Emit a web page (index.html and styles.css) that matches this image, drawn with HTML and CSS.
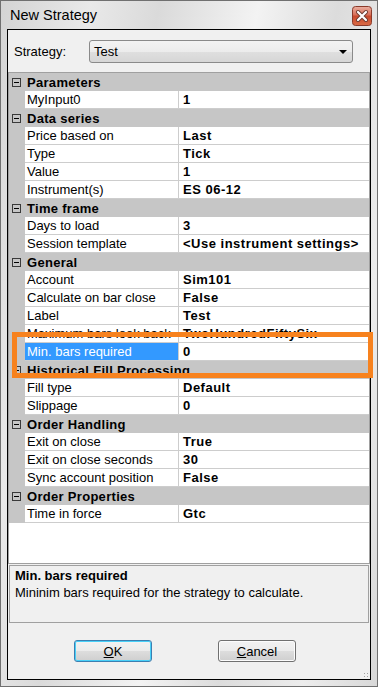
FILE: index.html
```html
<!DOCTYPE html>
<html lang="en">
<head>
    <meta charset="UTF-8">
    <title>New Strategy</title>
    <link rel="stylesheet" href="styles.css">
</head>
<body>
    <div class="window">
        <div class="titlebar">
            <span class="title">New Strategy</span>
            <svg class="close" width="20" height="20" viewBox="0 0 20 20">
                <defs>
                    <linearGradient id="red" x1="0" y1="0" x2="0" y2="1">
                        <stop offset="0" stop-color="#eab0a2"/>
                        <stop offset="0.45" stop-color="#d86e57"/>
                        <stop offset="0.5" stop-color="#c9492d"/>
                        <stop offset="1" stop-color="#d96b45"/>
                    </linearGradient>
                </defs>
                <rect x="0.5" y="0.5" width="19" height="19" rx="3" fill="url(#red)" stroke="#8a3a2a"/>
                <path d="M6 6 L14 14 M14 6 L6 14" stroke="#6b3a30" stroke-width="4" stroke-linecap="round"/>
                <path d="M6 6 L14 14 M14 6 L6 14" stroke="#ffffff" stroke-width="2.2" stroke-linecap="round"/>
            </svg>
        </div>

        <div class="client">
            <div class="strategy-row">
                <label class="strategy-label">Strategy:</label>
                <div class="combo">
                    <span>Test</span>
                    <span class="arrow"></span>
                </div>
            </div>

            <div class="grid">
                <div class="cat"><span class="toggle"></span>Parameters</div>
                <div class="prop"><span class="gutter"></span><span class="name">MyInput0</span><span class="value">1</span></div>

                <div class="cat"><span class="toggle"></span>Data series</div>
                <div class="prop"><span class="gutter"></span><span class="name">Price based on</span><span class="value">Last</span></div>
                <div class="prop"><span class="gutter"></span><span class="name">Type</span><span class="value">Tick</span></div>
                <div class="prop"><span class="gutter"></span><span class="name">Value</span><span class="value">1</span></div>
                <div class="prop"><span class="gutter"></span><span class="name">Instrument(s)</span><span class="value">ES 06-12</span></div>

                <div class="cat"><span class="toggle"></span>Time frame</div>
                <div class="prop"><span class="gutter"></span><span class="name">Days to load</span><span class="value">3</span></div>
                <div class="prop"><span class="gutter"></span><span class="name">Session template</span><span class="value">&lt;Use instrument settings&gt;</span></div>

                <div class="cat"><span class="toggle"></span>General</div>
                <div class="prop"><span class="gutter"></span><span class="name">Account</span><span class="value">Sim101</span></div>
                <div class="prop"><span class="gutter"></span><span class="name">Calculate on bar close</span><span class="value">False</span></div>
                <div class="prop"><span class="gutter"></span><span class="name">Label</span><span class="value">Test</span></div>
                <div class="prop"><span class="gutter"></span><span class="name">Maximum bars look back</span><span class="value">TwoHundredFiftySix</span></div>
                <div class="prop selected"><span class="gutter"></span><span class="name">Min. bars required</span><span class="value">0</span></div>

                <div class="cat"><span class="toggle"></span>Historical Fill Processing</div>
                <div class="prop"><span class="gutter"></span><span class="name">Fill type</span><span class="value">Default</span></div>
                <div class="prop"><span class="gutter"></span><span class="name">Slippage</span><span class="value">0</span></div>

                <div class="cat"><span class="toggle"></span>Order Handling</div>
                <div class="prop"><span class="gutter"></span><span class="name">Exit on close</span><span class="value">True</span></div>
                <div class="prop"><span class="gutter"></span><span class="name">Exit on close seconds</span><span class="value">30</span></div>
                <div class="prop"><span class="gutter"></span><span class="name">Sync account position</span><span class="value">False</span></div>

                <div class="cat"><span class="toggle"></span>Order Properties</div>
                <div class="prop"><span class="gutter"></span><span class="name">Time in force</span><span class="value">Gtc</span></div>
            </div>

            <div class="description">
                <div class="desc-title">Min. bars required</div>
                <div class="desc-text">Mininim bars required for the strategy to calculate.</div>
            </div>

            <div class="buttons">
                <button class="btn default"><u>O</u>K</button>
                <button class="btn"><u>C</u>ancel</button>
            </div>

            <div class="grip"></div>
        </div>
    </div>

    <div class="highlight"></div>
</body>
</html>
```

FILE: styles.css
```css
body {
    margin: 0;
    font-family: "Liberation Sans", Arial, sans-serif;
    font-size: 13px;
    color: #000;
}

.window {
    position: relative;
    width: 378px;
    height: 687px;
    box-sizing: border-box;
    border: 1px solid #707070;
    background: linear-gradient(100deg, #d4d4d4 0%, #e9e9e9 18%, #dadada 32%, #f3f3f3 52%, #dcdcdc 68%, #ececec 85%, #d8d8d8 100%);
}

.titlebar {
    height: 28px;
    display: flex;
    align-items: flex-start;
    justify-content: space-between;
    padding: 0 5px 0 9px;
}

.title {
    font-size: 14.5px;
    color: #000;
    margin-top: 6px;
}

.close {
    display: block;
    margin-top: 5px;
}

.client {
    position: relative;
    margin: 0 6px;
    height: 651px;
    box-sizing: border-box;
    border: 1px solid #000;
    background-color: #f0f0f0;
}

.strategy-row {
    display: flex;
    align-items: center;
    padding: 10px 0 0 6px;
    height: 23px;
}

.strategy-label {
    width: 75px;
}

.combo {
    width: 264px;
    height: 23px;
    box-sizing: border-box;
    border: 1px solid #8a8a8a;
    border-radius: 3px;
    background: linear-gradient(#f3f3f3 0%, #ececec 50%, #dfdfdf 51%, #d6d6d6 100%);
    display: flex;
    align-items: center;
    justify-content: space-between;
    padding: 0 5px 0 4px;
}

.arrow {
    width: 0;
    height: 0;
    border-left: 4px solid transparent;
    border-right: 4px solid transparent;
    border-top: 4px solid #000;
}

.grid {
    margin-top: 9px;
    height: 492px;
    box-sizing: border-box;
    border: 1px solid #a0a0a0;
    background-color: #fff;
}

.cat {
    height: 18px;
    line-height: 18px;
    padding-top: 1px;
    box-sizing: border-box;
    background-color: #c6c6c6;
    font-weight: bold;
    letter-spacing: 0.3px;
    display: flex;
    align-items: center;
}

.toggle {
    position: relative;
    width: 9px;
    height: 9px;
    box-sizing: border-box;
    border: 1px solid #3a3a3a;
    margin: 0 6px 0 3px;
}

.toggle::after {
    content: "";
    position: absolute;
    left: 1px;
    top: 3px;
    width: 5px;
    height: 1px;
    background-color: #000;
}

.prop {
    display: grid;
    grid-template-columns: 16px 153px 191px;
    height: 18px;
}

.gutter {
    background-color: #c6c6c6;
}

.name,
.value {
    border-bottom: 1px solid #cdcdcd;
    line-height: 18px;
    white-space: nowrap;
    overflow: hidden;
}

.name {
    padding-left: 2px;
}

.value {
    border-left: 1px solid #cdcdcd;
    padding-left: 4px;
    font-weight: bold;
    letter-spacing: 0.5px;
}

.selected .name {
    background-color: #3399ff;
    color: #fff;
}

.description {
    margin: 1px 1px 0;
    height: 58px;
    box-sizing: border-box;
    border: 1px solid #a0a0a0;
    padding: 1px 5px;
    line-height: 17px;
}

.desc-title {
    font-weight: bold;
}

.buttons {
    display: flex;
    gap: 66px;
    padding: 17px 0 0 66px;
}

.btn {
    width: 78px;
    height: 22px;
    border: 1px solid #707070;
    border-radius: 3px;
    background: linear-gradient(#f2f2f2 0%, #ebebeb 50%, #dddddd 51%, #cfcfcf 100%);
    box-shadow: inset 0 0 0 1px #fcfcfc;
    font-family: "Liberation Sans", Arial, sans-serif;
    font-size: 13px;
    color: #000;
    padding: 0;
}

.btn.default {
    border-color: #3c7fb1;
    box-shadow: inset 0 0 0 1px #48d0f8;
}

.grip {
    position: absolute;
    right: 1px;
    bottom: 1px;
    width: 6px;
    height: 6px;
    background: radial-gradient(circle, #a0a0a0 0.8px, transparent 1px) 0 0 / 3px 3px;
}

.highlight {
    position: absolute;
    left: 12px;
    top: 332px;
    width: 361px;
    height: 46px;
    box-sizing: border-box;
    border: 5px solid #f7821e;
}
```
